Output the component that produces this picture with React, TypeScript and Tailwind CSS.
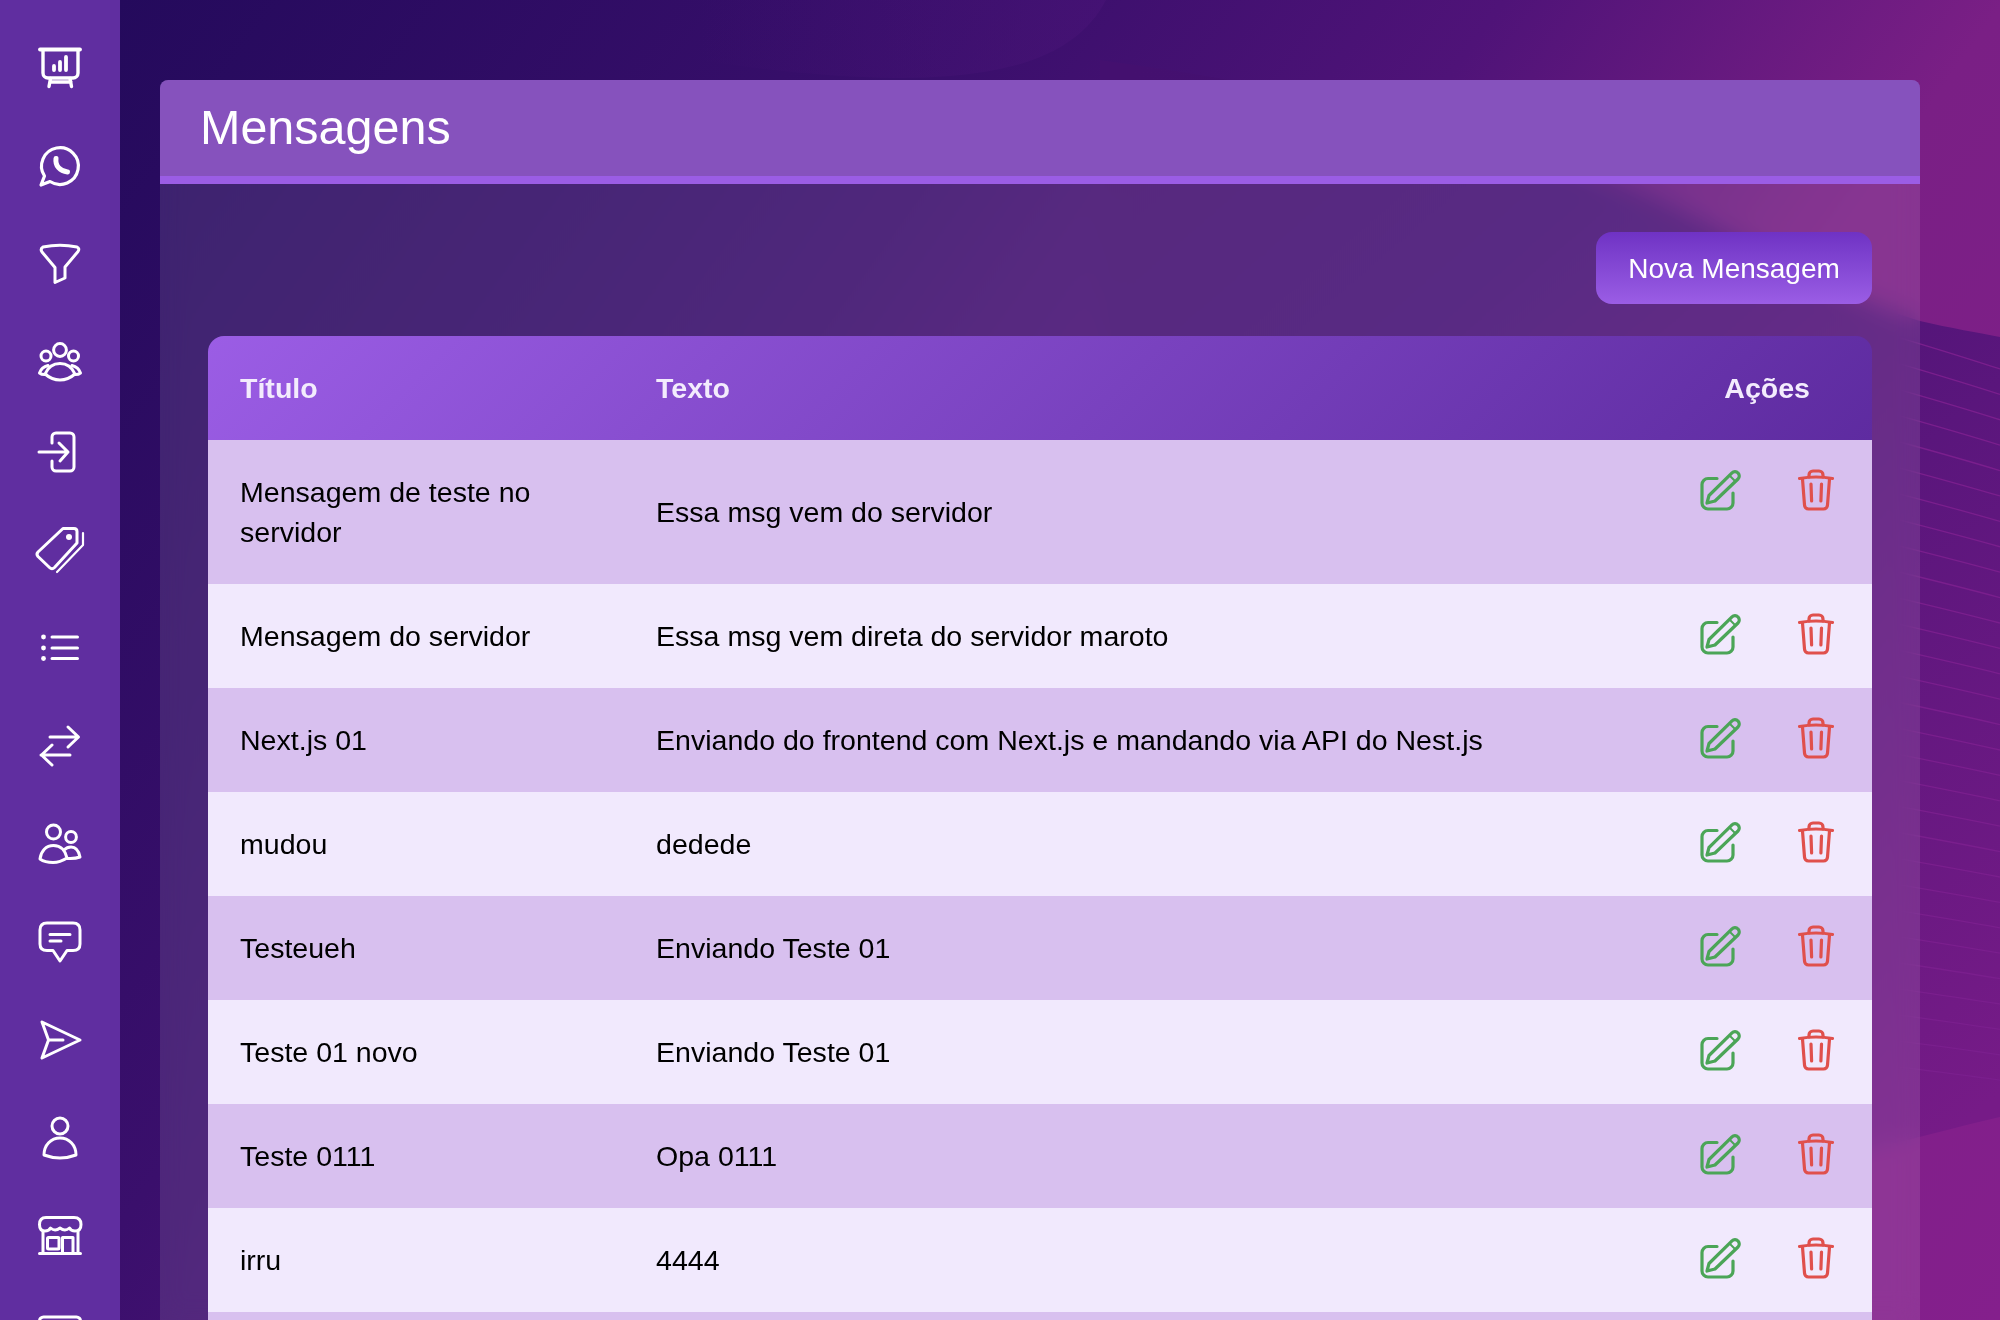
import type { ReactNode } from "react";

const rows = [
  { title: "Mensagem de teste no servidor", text: "Essa msg vem do servidor" },
  { title: "Mensagem do servidor", text: "Essa msg vem direta do servidor maroto" },
  { title: "Next.js 01", text: "Enviando do frontend com Next.js e mandando via API do Nest.js" },
  { title: "mudou", text: "dedede" },
  { title: "Testeueh", text: "Enviando Teste 01" },
  { title: "Teste 01 novo", text: "Enviando Teste 01" },
  { title: "Teste 0111", text: "Opa 0111" },
  { title: "irru", text: "4444" },
];

// background wave lines, y at x=1920 grows 26px per line, slope flattens going down
const waveLines = Array.from({ length: 29 }, (_, i) => {
  const y = 345 + i * 25.9;
  const drop = 24 - i * 0.5;
  return `M1900 ${y - drop * 0.3} Q1960 ${y + drop * 0.45} 2000 ${y + drop}`;
});

function NavIcon({ children, viewBox = "0 0 44 44" }: { children: ReactNode; viewBox?: string }) {
  return (
    <svg
      width="44"
      height="44"
      viewBox={viewBox}
      fill="none"
      stroke="white"
      strokeWidth="3"
      strokeLinecap="round"
      strokeLinejoin="round"
      className="overflow-visible"
    >
      {children}
    </svg>
  );
}

const navIcons: { node: ReactNode; short?: boolean }[] = [
  {
    node: (
      <NavIcon>
        <path d="M2 3.5H42" strokeWidth="3.8" />
        <path d="M5 4V27a5 5 0 0 0 5 5H35a5 5 0 0 0 5-5V4" strokeWidth="3.4" />
        <path d="M12.5 32.5L11 40.5M32 32.5L33.5 40.5M12 36H33" strokeWidth="3.4" />
        <path d="M16 20V24M22 16V24M28 11V24" strokeWidth="3.8" />
      </NavIcon>
    ),
  },
  {
    node: (
      <NavIcon>
        <path d="M3 41L6.5 32A18.4 18.4 0 1 1 12 37.5Z" strokeWidth="3.2" />
        <path d="M18 14.5C17 22 22 27 29.5 28" strokeWidth="5" />
      </NavIcon>
    ),
  },
  {
    node: (
      <NavIcon>
        <path d="M5 5Q22 1.5 39 5Q42 6.5 40 9.5L27 25V36L17 40.5V25.5L4 10Q2 7 5 5Z" />
      </NavIcon>
    ),
  },
  {
    node: (
      <NavIcon>
        <circle cx="22" cy="10" r="6.4" />
        <circle cx="8" cy="16" r="5" />
        <circle cx="35.5" cy="16" r="5" />
        <path d="M7 34C10 27 15 23.5 22 23.5C29 23.5 34 27 37 34Q30 40 22 40Q14 40 7 34Z" />
        <path d="M10 25.5Q3.5 27 1.5 33Q4 35 8 34.5M34 25.5Q40.5 27 42.5 33Q40 35 36 34.5" />
      </NavIcon>
    ),
  },
  {
    short: true,
    node: (
      <NavIcon viewBox="0 4 44 44">
        <path d="M14 13V7a4 4 0 0 1 4-4H32a4 4 0 0 1 4 4V37a4 4 0 0 1-4 4H18a4 4 0 0 1-4-4V31" />
        <path d="M1 22H30M21 13L30 22L22 31" />
      </NavIcon>
    ),
  },
  {
    node: (
      <NavIcon>
        <path d="M25 0.5H36Q39 0.5 39 3.5V15L16.5 39.5Q14 42 11.5 39.5L0 28.5Q-2 26 0 24Z" />
        <path d="M45 5V17L19 44" strokeWidth="2.2" />
        <circle cx="31" cy="9" r="3" fill="white" stroke="none" />
      </NavIcon>
    ),
  },
  {
    node: (
      <NavIcon>
        <path d="M14 11H39.5M14 22H39.5M14 32.5H39.5" />
        <circle cx="5.5" cy="11" r="2.4" fill="white" stroke="none" />
        <circle cx="5.5" cy="22" r="2.4" fill="white" stroke="none" />
        <circle cx="5.5" cy="32.5" r="2.4" fill="white" stroke="none" />
      </NavIcon>
    ),
  },
  {
    node: (
      <NavIcon>
        <path d="M12 13H40M30 3L40.5 13L30 23" />
        <path d="M32 31H3M14 21L3.5 31L14 41" />
      </NavIcon>
    ),
  },
  {
    node: (
      <NavIcon>
        <circle cx="15.5" cy="10" r="7" />
        <circle cx="33" cy="15" r="5.4" />
        <path d="M2 37C3 29 8 23.5 15.5 23.5C23 23.5 27.5 29 29 36Q22 40.5 15 40.5Q7 40.5 2 37Z" />
        <path d="M26 28Q29 25 33 25Q40 25 42 35Q37 37 29.5 36.5" />
      </NavIcon>
    ),
  },
  {
    node: (
      <NavIcon>
        <path d="M9 3H35Q42 3 42 10V24Q42 30.5 35 30.5H29L22 41L15 30.5H9Q2 30.5 2 24V10Q2 3 9 3Z" />
        <path d="M12 14.5H32M12 21H23" />
      </NavIcon>
    ),
  },
  {
    node: (
      <NavIcon>
        <path d="M4 4L42 22L4 40L10.5 22Z" />
        <path d="M10.5 22H25" />
      </NavIcon>
    ),
  },
  {
    node: (
      <NavIcon>
        <circle cx="22" cy="10" r="8" />
        <path d="M6 39C6 29 13 22 22 22C31 22 38 29 38 39Q30 42 22 42Q14 42 6 39Z" />
      </NavIcon>
    ),
  },
  {
    node: (
      <NavIcon>
        <path d="M8 3.5H36Q43 3.5 43 10.5Q43 17 37 17Q33 17 31.5 14Q27 18 22 14Q17 18 12.5 14Q11 17 7 17Q1.5 17 1.5 10.5Q1.5 3.5 8 3.5Z" />
        <path d="M5 17V39M40 17V39M1.5 39.5H42.5" />
        <rect x="9.5" y="23.5" width="11.5" height="11.5" rx="1" />
        <path d="M24.5 39V23.5H35V39" />
      </NavIcon>
    ),
  },
  {
    node: (
      <NavIcon>
        <rect x="1.5" y="5" width="41" height="34" rx="4" />
      </NavIcon>
    ),
  },
];

function EditIcon() {
  return (
    <svg width="42" height="42" viewBox="0 0 42 42" fill="none" stroke="#4ba557" strokeWidth="3.2" strokeLinecap="round" strokeLinejoin="round">
      <path d="M17 9.5H8a6 6 0 0 0-6 6V34a6 6 0 0 0 6 6H27a6 6 0 0 0 6-6V24" />
      <path d="M7 34L9 26.5L32 3.8a4.2 4.2 0 0 1 6 .2a4.2 4.2 0 0 1 0 6L15 32Z" />
      <path d="M29.5 6.5L35 12" strokeWidth="2" />
    </svg>
  );
}

function TrashIcon() {
  return (
    <svg width="36" height="42" viewBox="0 0 36 42" fill="none" stroke="#e0504c" strokeWidth="3.2" strokeLinecap="round" strokeLinejoin="round">
      <path d="M1.5 9.5Q18 6.5 34.5 9.5" />
      <path d="M11 8V6a4 4 0 0 1 4-4h6a4 4 0 0 1 4 4V8" />
      <path d="M4.5 10L6.5 36a4 4 0 0 0 4 4h15a4 4 0 0 0 4-4L31.5 10" />
      <path d="M13 15L13.6 32M23.5 15L22.9 32" />
    </svg>
  );
}

function Background() {
  return (
    <svg className="absolute inset-0" width="2000" height="1320" viewBox="0 0 2000 1320">
      <defs>
        <linearGradient id="base" gradientUnits="userSpaceOnUse" x1="0" y1="0" x2="1943" y2="1399">
          <stop offset="0.04" stopColor="#240a5c" />
          <stop offset="0.34" stopColor="#3a0f6c" />
          <stop offset="0.51" stopColor="#4f1378" />
          <stop offset="0.68" stopColor="#7a1f85" />
          <stop offset="1" stopColor="#841f8c" />
        </linearGradient>
        <linearGradient id="wave" gradientUnits="userSpaceOnUse" x1="1100" y1="100" x2="2000" y2="1130">
          <stop offset="0" stopColor="#44106f" />
          <stop offset="0.28" stopColor="#461275" />
          <stop offset="0.516" stopColor="#55157a" />
          <stop offset="0.98" stopColor="#761b87" />
        </linearGradient>
        <linearGradient id="lobe" gradientUnits="userSpaceOnUse" x1="700" y1="0" x2="1106" y2="0">
          <stop offset="0" stopColor="#4a1478" stopOpacity="0" />
          <stop offset="1" stopColor="#4a1478" stopOpacity="0.5" />
        </linearGradient>
      </defs>
      <rect width="2000" height="1320" fill="url(#base)" />
      <path d="M700 0H1106C1080 50 1020 78 900 78C840 78 760 70 700 60Z" fill="url(#lobe)" />
      <path
        d="M1100 60C1400 100 1600 170 1700 220C1800 270 1880 310 1920 321C1950 328 1980 333 2000 337V1117C1900 1140 1500 1250 1100 1320Z"
        fill="url(#wave)"
      />
      {waveLines.map((d) => (
        <path key={d} d={d} fill="none" stroke="#7a1f8d" strokeWidth="1.3" />
      ))}
    </svg>
  );
}

export default function App() {
  return (
    <div className="relative flex h-[1320px] w-[2000px] overflow-hidden font-['Liberation_Sans',Arial,sans-serif]">
      <Background />

      <aside className="relative flex h-full w-[120px] shrink-0 flex-col overflow-hidden bg-[#602ea0] pt-[19px]">
        {navIcons.map((item, i) => (
          <div key={i} className={`flex shrink-0 items-center justify-center ${item.short ? "h-[90px]" : "h-[98px]"}`}>
            {item.node}
          </div>
        ))}
      </aside>

      <main className="relative min-w-0 flex-1 pt-[80px] pr-[80px] pl-[40px]">
        <section className="h-full rounded-t-lg bg-white/10 backdrop-blur-md">
          <header className="flex h-[104px] items-center rounded-t-lg border-b-8 border-[#9b5de5] bg-[#8652bd] pb-[2px] pl-[40px]">
            <h1 className="text-[48.5px] leading-none font-normal text-white">Mensagens</h1>
          </header>

          <div className="px-[48px] pt-[48px]">
            <div className="flex justify-end">
              <button className="h-[72px] w-[276px] rounded-2xl bg-linear-to-b from-[#6f32c4] to-[#9b5de5] pt-[1px] text-[28px] text-white">
                Nova Mensagem
              </button>
            </div>

            <div className="mt-[32px] overflow-hidden rounded-t-2xl">
              <table className="w-full table-fixed border-collapse text-[28.55px] leading-[40px] text-black">
                <thead>
                  <tr className="h-[104px] bg-linear-135 from-[#9b5de5] to-[#5e2ba0] text-[#f3ecfd]">
                    <th className="w-[416px] px-[32px] pb-[1px] text-left font-bold">Título</th>
                    <th className="px-[32px] pb-[1px] text-left font-bold">Texto</th>
                    <th className="w-[280px] pr-[62px] pb-[1px] text-right font-bold">Ações</th>
                  </tr>
                </thead>
                <tbody>
                  {rows.map((row, i) => (
                    <tr key={row.title} className={i % 2 === 0 ? "bg-[#d8c0ef]" : "bg-[#f1e9fd]"}>
                      <td className="px-[32px] py-[32px]">{row.title}</td>
                      <td className="px-[32px] py-[32px]">{row.text}</td>
                      <td className="pt-[29px] pr-[38px] align-top">
                        <div className="flex items-start justify-end gap-[56px]">
                          <EditIcon />
                          <TrashIcon />
                        </div>
                      </td>
                    </tr>
                  ))}
                  <tr className="h-[104px] bg-[#d8c0ef]">
                    <td colSpan={3} />
                  </tr>
                </tbody>
              </table>
            </div>
          </div>
        </section>
      </main>
    </div>
  );
}
